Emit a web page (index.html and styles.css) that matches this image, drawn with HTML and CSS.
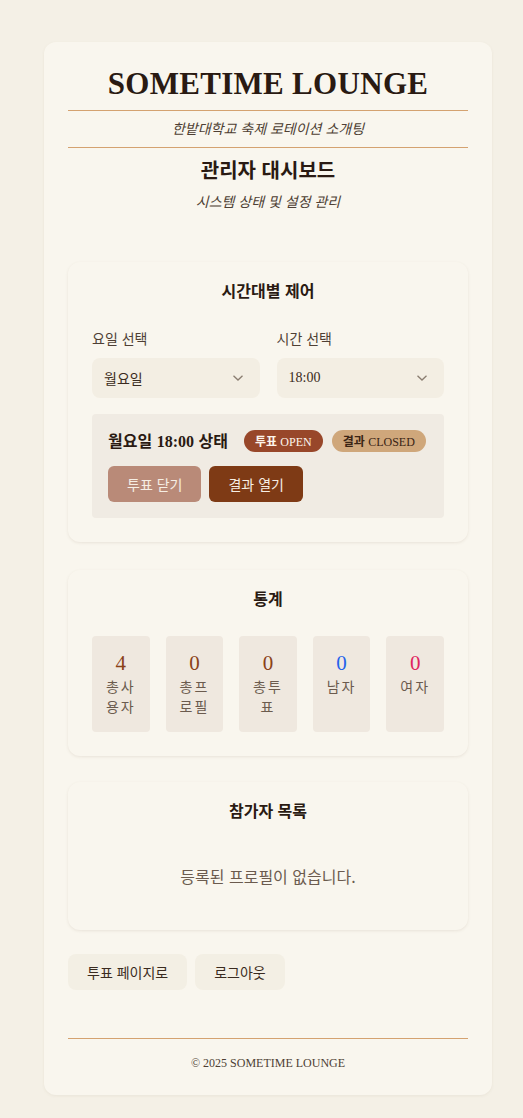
FILE: index.html
```html
<!DOCTYPE html>
<html lang="ko">
<head>
<meta charset="utf-8">
<title>관리자 대시보드</title>
<link rel="stylesheet" href="styles.css">
</head>
<body>
<div class="page">
  <header class="header">
    <h1 class="brand">SOMETIME LOUNGE</h1>
    <div class="tagline">한밭대학교 축제 로테이션 소개팅</div>
    <h2 class="title">관리자 대시보드</h2>
    <div class="subtitle">시스템 상태 및 설정 관리</div>
  </header>

  <section class="card control">
    <h3 class="card-title">시간대별 제어</h3>
    <div class="selects">
      <div class="field">
        <label class="label">요일 선택</label>
        <div class="select">
          <span>월요일</span>
          <svg class="chev" width="12" height="8" viewBox="0 0 12 8"><path d="M1.5 1.8 L6 6 L10.5 1.8" fill="none" stroke="#8a7d70" stroke-width="1.3"/></svg>
        </div>
      </div>
      <div class="field">
        <label class="label">시간 선택</label>
        <div class="select">
          <span class="latin">18:00</span>
          <svg class="chev" width="12" height="8" viewBox="0 0 12 8"><path d="M1.5 1.8 L6 6 L10.5 1.8" fill="none" stroke="#8a7d70" stroke-width="1.3"/></svg>
        </div>
      </div>
    </div>
    <div class="status">
      <div class="status-row">
        <span class="status-title">월요일 <span class="latin">18:00</span> 상태</span>
        <span class="badge badge-open">투표 <span class="latin">OPEN</span></span>
        <span class="badge badge-closed">결과 <span class="latin">CLOSED</span></span>
      </div>
      <div class="status-actions">
        <button class="btn btn-faded">투표 닫기</button>
        <button class="btn btn-dark">결과 열기</button>
      </div>
    </div>
  </section>

  <section class="card stats">
    <h3 class="card-title">통계</h3>
    <div class="stat-grid">
      <div class="stat"><div class="num num-brown">4</div><div class="stat-label">총사용자</div></div>
      <div class="stat"><div class="num num-brown">0</div><div class="stat-label">총프로필</div></div>
      <div class="stat"><div class="num num-brown">0</div><div class="stat-label">총투표</div></div>
      <div class="stat"><div class="num num-blue">0</div><div class="stat-label">남자</div></div>
      <div class="stat"><div class="num num-pink">0</div><div class="stat-label">여자</div></div>
    </div>
  </section>

  <section class="card list">
    <h3 class="card-title">참가자 목록</h3>
    <p class="empty">등록된 프로필이 없습니다.</p>
  </section>

  <div class="bottom-actions">
    <button class="btn-light">투표 페이지로</button>
    <button class="btn-light">로그아웃</button>
  </div>

  <footer class="footer">
    <span class="latin">© 2025 SOMETIME LOUNGE</span>
  </footer>
</div>
</body>
</html>
```

FILE: styles.css
```css
* { box-sizing: border-box; }

html, body {
  margin: 0;
  padding: 0;
}

body {
  background: #f4f0e6;
  font-family: "Noto Sans CJK KR", "Liberation Serif", serif;
  color: #2b1d14;
  padding: 42px 31px 24px 44px;
}

.latin {
  font-family: "Liberation Serif", "Noto Sans CJK KR", serif;
}

.page {
  background: #f9f6ee;
  border-radius: 12px;
  padding: 24px 24px 23px;
  box-shadow: 0 1px 3px rgba(120, 100, 70, 0.08);
}

.header {
  text-align: center;
}

.brand {
  margin: 0;
  font-family: "Liberation Serif", serif;
  font-weight: 700;
  font-size: 31px;
  letter-spacing: 0.3px;
  line-height: 36px;
  color: #2a1a12;
}

.tagline {
  margin-top: 8px;
  border-top: 1px solid #d4a270;
  border-bottom: 1px solid #d4a270;
  font-style: italic;
  font-size: 14px;
  line-height: 20px;
  padding: 7px 0 9px;
  color: #4e3f34;
}

.title {
  margin: 8px 0 0;
  font-size: 20px;
  font-weight: 700;
  line-height: 28px;
  color: #2a1a12;
}

.subtitle {
  margin-top: 7px;
  font-style: italic;
  font-size: 14px;
  line-height: 20px;
  color: #4e3f34;
}

.card {
  background: #f9f6ee;
  border-radius: 12px;
  box-shadow: 0 1px 3px rgba(120, 100, 70, 0.12);
  padding: 16px 24px 24px;
}

.control { margin-top: 51px; }
.stats { margin-top: 28px; }
.list { margin-top: 26px; }

.card-title {
  margin: 0;
  text-align: center;
  font-size: 16px;
  font-weight: 700;
  line-height: 24px;
  color: #2a1a12;
}

.selects {
  display: grid;
  grid-template-columns: 1fr 1fr;
  gap: 17px;
  margin-top: 26px;
}

.label {
  display: block;
  font-size: 14px;
  line-height: 20px;
  color: #4e3f34;
}

.select {
  margin-top: 10px;
  height: 40px;
  border-radius: 8px;
  background: #f3eee3;
  display: flex;
  align-items: center;
  justify-content: space-between;
  padding: 0 12px 0 12px;
  font-size: 14px;
  color: #3a2b20;
}

.chev { margin-right: 4px; }

.status {
  margin-top: 16px;
  background: #f0ebe3;
  border-radius: 4px;
  padding: 15px 16px 16px;
}

.status-row {
  display: flex;
  align-items: center;
  gap: 9px;
  height: 24px;
}

.status-title {
  font-size: 16px;
  font-weight: 700;
  line-height: 24px;
  margin-right: 7px;
  color: #2a1a12;
}

.badge {
  font-size: 12px;
  line-height: 22px;
  height: 22px;
  padding: 0 11px;
  border-radius: 11px;
  font-weight: 700;
}

.badge .latin { font-weight: 400; }

.badge-open {
  background: #98472a;
  color: #fdf5ec;
}

.badge-closed {
  background: #cfa77b;
  color: #3a2414;
}

.status-actions {
  display: flex;
  gap: 8px;
  margin-top: 13px;
}

.btn {
  border: none;
  border-radius: 6px;
  height: 36px;
  padding: 0 19px;
  font-family: "Noto Sans CJK KR", serif;
  font-size: 14px;
  color: #f6eee4;
}

.btn-faded { background: #b98a78; }
.btn-dark { background: #7e3a15; }

.stat-grid {
  display: grid;
  grid-template-columns: repeat(5, 1fr);
  gap: 16px;
  margin-top: 26px;
}

.stat {
  background: #efe8df;
  border-radius: 4px;
  height: 96px;
  padding: 14px 8px 0;
  text-align: center;
}

.num {
  font-family: "Liberation Serif", serif;
  font-size: 21px;
  line-height: 26px;
}

.num-brown { color: #8a4218; }
.num-blue { color: #2563eb; }
.num-pink { color: #e0245e; }

.stat-label {
  font-size: 14px;
  line-height: 20px;
  color: #6b5b4e;
  letter-spacing: 2px;
  word-break: break-all;
}

.empty {
  margin: 42px 0 18px;
  text-align: center;
  font-size: 16px;
  line-height: 24px;
  color: #6b5b4e;
}

.bottom-actions {
  display: flex;
  gap: 8px;
  margin-top: 24px;
}

.btn-light {
  border: none;
  background: #f3efe4;
  border-radius: 8px;
  height: 36px;
  padding: 0 19px;
  font-family: "Noto Sans CJK KR", serif;
  font-size: 14px;
  color: #3a2b20;
}

.footer {
  margin-top: 48px;
  border-top: 1px solid #d4a270;
  padding-top: 14px;
  text-align: center;
  font-size: 12px;
  line-height: 18px;
  color: #4e3f34;
}
```
